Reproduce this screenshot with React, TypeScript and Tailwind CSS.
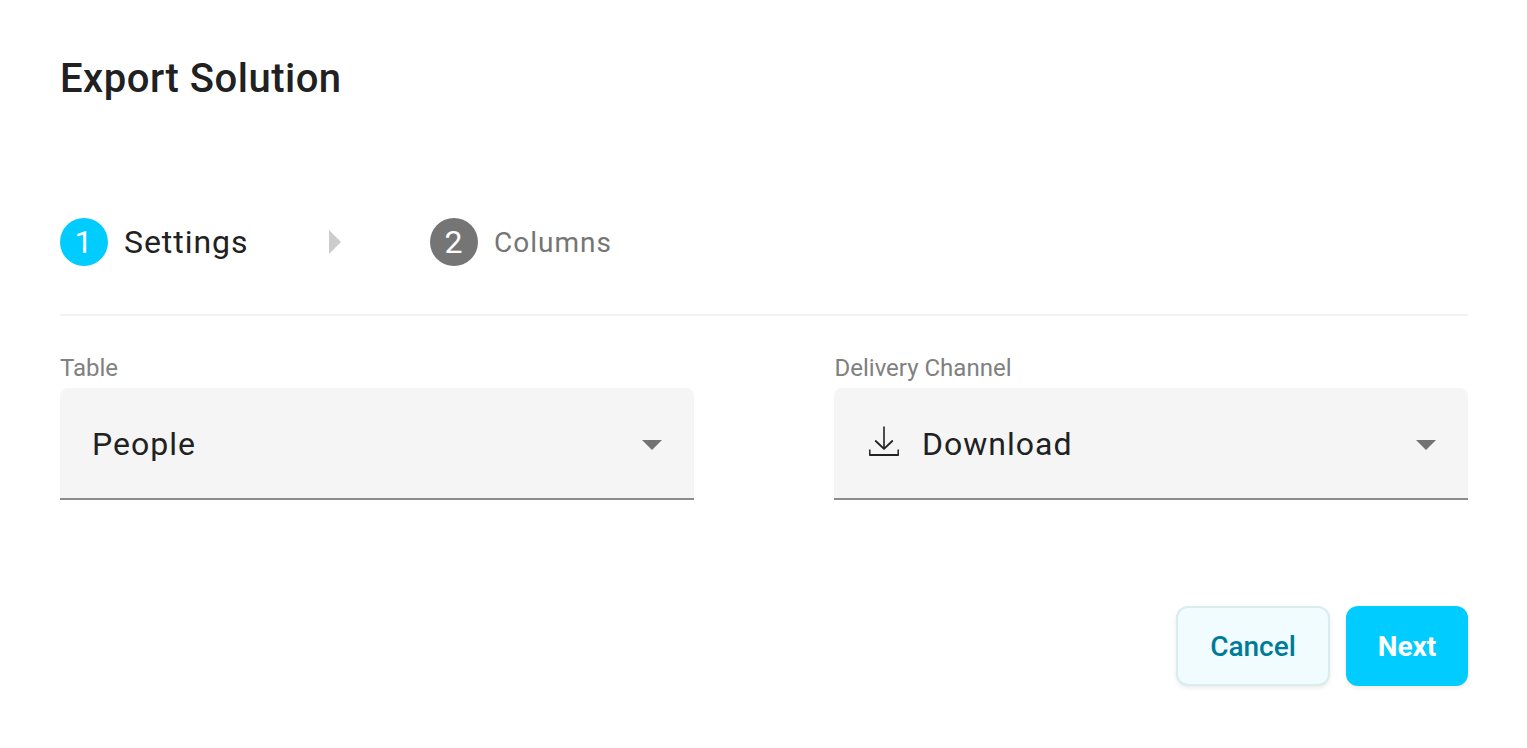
import React from "react";

type FieldProps = { label: string; labelClass?: string; value: string; icon?: React.ReactNode };

function Field({ label, labelClass = "", value, icon }: FieldProps) {
  return (
    <div className="w-[634px]">
      <div className={`h-10 pt-1 text-[24px] leading-[32px] text-[#808080] ${labelClass}`}>{label}</div>
      <div className="flex h-28 items-center rounded-t-lg border-b-2 border-[#8c8c8c] bg-[#f5f5f5] pt-0.5 pr-8 pl-8">
        {icon}
        <span className="text-[32px] leading-[48px] tracking-[1px] text-[#212121]">{value}</span>
        <svg className="mt-0.5 ml-auto" width="20" height="10" viewBox="0 0 20 10">
          <path d="M0 0h20L10 10z" fill="#737373" />
        </svg>
      </div>
    </div>
  );
}

function DownloadIcon() {
  return (
    <svg className="-mt-1 mr-[22px]" width="34" height="34" viewBox="0 0 34 34" fill="none" stroke="#212121">
      <path d="M18 1.5V24" strokeWidth="1.6" />
      <path d="M9.7 16l8.3 7.8 8.3-7.8" strokeWidth="1.8" strokeLinecap="round" strokeLinejoin="round" />
      <path d="M3.8 24.5V30M32.2 24.5V30" strokeWidth="1.5" />
      <path d="M3.2 30h29.6" strokeWidth="2" />
    </svg>
  );
}

export default function App() {
  return (
    <div className="h-[748px] w-[1527px] bg-white pt-[55px] pl-[60px] font-['Roboto',sans-serif]">
      <div className="w-[1408px]">
        <h1 className="h-12 text-[40px] leading-[48px] font-medium tracking-[0.5px] text-[#212121]">Export Solution</h1>
        <div className="mt-[115px] flex h-12 items-center">
          <div className="flex w-[269px] items-center gap-4">
            <span className="flex size-12 items-center justify-center rounded-full bg-[#00ccff] pr-px text-[32px] text-white">1</span>
            <span className="text-[32px] tracking-[0.95px] text-[#212121]">Settings</span>
          </div>
          <svg className="mr-[89px]" width="12" height="24" viewBox="0 0 12 24">
            <path d="M0 0v24L12 12z" fill="#cccccc" />
          </svg>
          <span className="flex size-12 items-center justify-center rounded-full bg-[#757575] pr-px text-[32px] text-white">2</span>
          <span className="ml-4 pt-0.5 text-[28px] tracking-[1px] text-[#757575]">Columns</span>
        </div>
        <div className="mt-12 h-0.5 bg-[#f2f2f2]" />
        <div className="mt-8 flex justify-between">
          <Field label="Table" value="People" />
          <Field label="Delivery Channel" labelClass="pl-[0.5px]" value="Download" icon={<DownloadIcon />} />
        </div>
        <div className="mt-[106px] flex justify-end gap-4">
          <button className="h-20 w-[154px] rounded-xl border-2 border-[#d9ecee] bg-[#f0fcff] pt-0.5 text-[28px] font-medium text-[#007a99] shadow-[0_2px_4px_rgba(0,0,0,0.08)]">Cancel</button>
          <button className="h-20 w-[122px] rounded-xl bg-[#00ccff] pt-0.5 text-[28px] font-bold text-white shadow-[0_2px_4px_rgba(0,0,0,0.08)]">Next</button>
        </div>
      </div>
    </div>
  );
}
